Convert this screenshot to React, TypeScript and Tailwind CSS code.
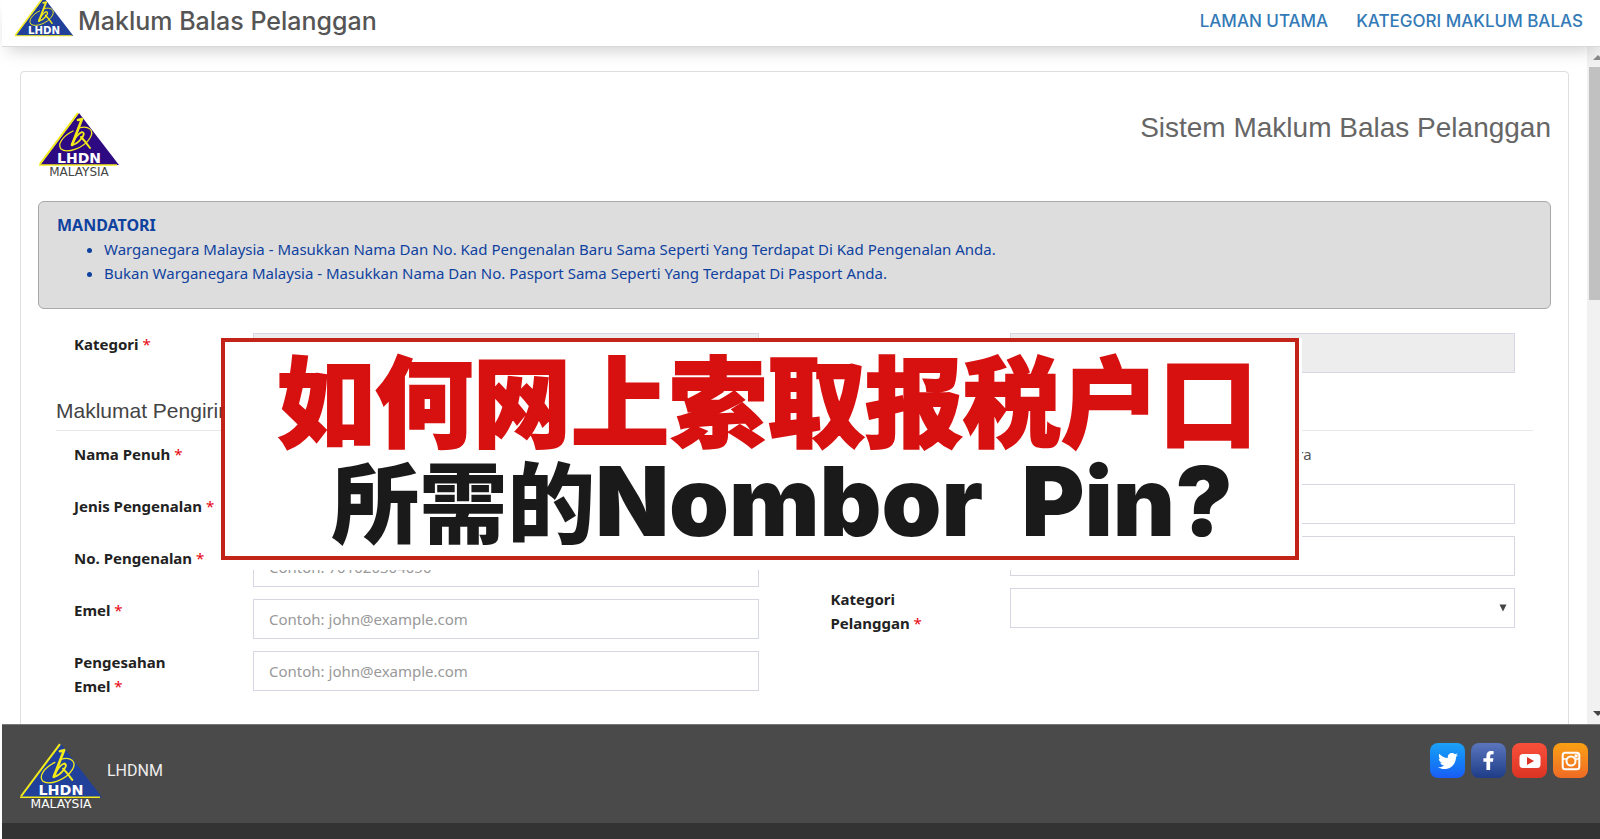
import { ReactNode } from 'react'
import { FaFacebookF, FaTwitter } from 'react-icons/fa'

type LogoProps = {
  className: string
  fill: string
  caption?: string
}

const Logo = ({ className, fill, caption }: LogoProps) => (
  <svg viewBox={caption ? '0 0 82 67' : '0 0 82 54'} className={className} role="img" aria-label="LHDN">
    <path d="M41 1 L81 53 H2 Z" fill={fill} />
    <path d="M40 1 L2 52" stroke="#f2ea1a" strokeWidth="2" fill="none" />
    <path d="M1 53 H79" stroke="#f2ea1a" strokeWidth="1.5" fill="none" />
    <g fill="none" stroke="#f2ea1a" strokeLinecap="round" strokeLinejoin="round">
      <path d="M40 8 L44 7 L34 33" strokeWidth="2.6" />
      <path d="M34 32 Q39 22 44 20 Q48 21 43 27 Q39 32 34 33" strokeWidth="1.8" />
      <path d="M41 16 C50 13 57 18 52 26 C46 36 29 42 23 37 C19 32 25 24 35 19" strokeWidth="1.3" />
      <path d="M43 25 Q47 29 52 36" strokeWidth="2" />
    </g>
    <text x="41" y="50.5" textAnchor="middle" fill="#fff" fontFamily="DejaVu Sans" fontWeight="700" fontSize="14">LHDN</text>
    {caption && (
      <text x="41" y="63.5" textAnchor="middle" fill={caption} fontFamily="DejaVu Sans" fontSize="12">MALAYSIA</text>
    )}
  </svg>
)

type RowProps = {
  id: string
  label?: string
  children: ReactNode
}

const Row = ({ id, label, children }: RowProps) => (
  <div className="flex">
    <div className="-mt-px w-[179px] shrink-0 pr-[38px]">
      {label && (
        <label htmlFor={id} className="font-bold text-[#222]">
          {label}&nbsp;<span className="font-normal text-red-600">*</span>
        </label>
      )}
    </div>
    <div className="relative min-w-0 flex-1">{children}</div>
  </div>
)

const field = 'block h-10 w-full border border-[#d5d8e2] bg-white px-[15px] placeholder:text-[#999] disabled:bg-[#ededed]'

export default function App() {
  return (
    <div className="flex h-screen flex-col overflow-hidden bg-white pl-0.5 font-['Noto_Sans','Noto_Sans_CJK_SC',sans-serif] text-[15px] leading-6">
      <header className="relative z-10 flex h-[47px] shrink-0 items-center justify-between border-b border-[#d9d9d9] bg-white pr-[17px] pb-1 pl-3 font-['Inter',sans-serif] shadow-[0_8px_18px_-6px_rgba(0,0,0,0.22)]">
        <a href="#" className="flex items-center gap-1">
          <Logo className="-mt-2 w-[60px]" fill="#20409a" />
          <span className="text-[25px] font-medium text-[#555]">Maklum Balas Pelanggan</span>
        </a>
        <nav className="flex gap-7 text-[17px] font-medium text-[#337ab7]">
          <a href="#">LAMAN UTAMA</a>
          <a href="#">KATEGORI MAKLUM BALAS</a>
        </nav>
      </header>

      <div className="flex min-h-0 flex-1">
        <main className="min-w-0 flex-1 overflow-hidden pt-6 pr-[18px] pl-[18px]">
          <div className="relative h-[900px] rounded border border-[#dedede] px-[17px] pt-10">
            <div className="flex items-start justify-between">
              <Logo className="w-[82px]" fill="#2e0a82" caption="#444" />
              <h1 className="font-['Liberation_Sans',sans-serif] text-[28px] leading-8 text-[#666]">Sistem Maklum Balas Pelanggan</h1>
            </div>

            <section className="mt-[22px] h-[108px] rounded-md border border-[#a9a9a9] bg-[#ddd] px-[18px] pt-[11px] text-[#0f429f]">
              <h2 className="text-base leading-6 font-bold">MANDATORI</h2>
              <ul className="list-disc pl-[47px]">
                <li>Warganegara Malaysia - Masukkan Nama Dan No. Kad Pengenalan Baru Sama Seperti Yang Terdapat Di Kad Pengenalan Anda.</li>
                <li>Bukan Warganegara Malaysia - Masukkan Nama Dan No. Pasport Sama Seperti Yang Terdapat Di Pasport Anda.</li>
              </ul>
            </section>

            <form>
              <div className="mt-6 grid grid-cols-2">
                <div className="px-9">
                  <Row id="kategori" label="Kategori">
                    <input id="kategori" disabled className={field} />
                  </Row>
                </div>
                <div className="px-9">
                  <Row id="subkategori">
                    <input id="subkategori" aria-label="Sub Kategori" disabled className={field} />
                  </Row>
                </div>
              </div>

              <h2 className="mx-[18px] mt-6 mb-3 border-b border-[#e8e8e8] pb-[5px] font-['Liberation_Sans',sans-serif] text-[21px] leading-7 text-[#444]">Maklumat Pengirim</h2>

              <div className="grid grid-cols-2">
                <div className="flex flex-col gap-3 px-9">
                  <Row id="nama" label="Nama Penuh">
                    <input id="nama" className={field} />
                  </Row>
                  <Row id="jenis" label="Jenis Pengenalan">
                    <input id="jenis" className={field} />
                  </Row>
                  <Row id="nombor" label="No. Pengenalan">
                    <input id="nombor" placeholder="Contoh: 701020304050" className={field} />
                  </Row>
                  <Row id="emel" label="Emel">
                    <input id="emel" type="email" placeholder="Contoh: john@example.com" className={field} />
                  </Row>
                  <Row id="sahemel" label="Pengesahan Emel">
                    <input id="sahemel" type="email" placeholder="Contoh: john@example.com" className={field} />
                  </Row>
                </div>
                <div className="flex flex-col gap-3 px-9">
                  <Row id="warga">
                    <div className="-mt-px flex h-[30px] items-start gap-[126px] text-[#555]">
                      <input id="warga" type="radio" name="warga" aria-label="Warganegara" className="mt-1.5" />
                      <label className="flex items-start gap-1.5">
                        <input type="radio" name="warga" className="mt-1.5" />
                        Bukan Warganegara
                      </label>
                    </div>
                  </Row>
                  <Row id="telefon">
                    <input id="telefon" aria-label="No. Telefon" className={field} />
                  </Row>
                  <Row id="bimbit">
                    <input id="bimbit" aria-label="No. Telefon Bimbit" className={field} />
                  </Row>
                  <Row id="pelanggan" label="Kategori Pelanggan">
                    <select id="pelanggan" className={`${field} appearance-none`} />
                    <svg viewBox="0 0 8 8" className="pointer-events-none absolute top-4 right-2 size-2" fill="#444">
                      <path d="M0.5 0.5 H7.5 L4 7.5 Z" />
                    </svg>
                  </Row>
                </div>
              </div>
            </form>

            <div className="absolute top-[266px] left-[204px] h-[232px] w-[1077px] bg-white" />
            <div className="absolute top-[266px] left-[200px] flex h-[222px] w-[1078px] flex-col items-center border-4 border-[#c0180c]/95 font-['Inter','Noto_Sans_CJK_SC',sans-serif] font-black">
              <p className="mt-2 pl-3.5 text-[98px] leading-[108px] text-[#d71010] [-webkit-text-stroke:2px_#d71010]">如何网上索取报税户口</p>
              <p className="pl-11 text-[88px] leading-[86px] text-[#1a1a1a]">
                所需的<span className="text-[96px]">Nombor&nbsp; Pin?</span>
              </p>
            </div>
          </div>
        </main>

        <div className="flex w-[13px] shrink-0 flex-col overflow-hidden bg-[#f1f1f1] pl-0.5">
          <svg viewBox="0 0 14 20" className="h-5 w-[14px] shrink-0" fill="#8a8a8a">
            <path d="M4 13 L9 8 L14 13 Z" />
          </svg>
          <div className="h-[233px] bg-[#c1c1c1]" />
          <svg viewBox="0 0 14 20" className="mt-auto h-5 w-[14px] shrink-0" fill="#444">
            <path d="M4 7 H14 L9 12 Z" />
          </svg>
        </div>
      </div>

      <footer className="shrink-0 border-b-16 border-[#333] bg-[#4a4a4a]">
        <div className="flex h-[99px] items-start justify-between border-t border-[#777] pt-[18px] pr-3 pl-[17px]">
          <div className="flex items-center gap-1">
            <Logo className="w-[84px]" fill="#20409a" caption="#fff" />
            <span className="-mt-3 font-['Roboto',sans-serif] text-base text-[#eee]">LHDNM</span>
          </div>
          <div className="flex gap-1.5">
            <a href="#" aria-label="Twitter" className="flex size-[35px] items-center justify-center rounded-lg bg-linear-to-b from-[#1da1f6] to-[#1b5cf5] text-white">
              <FaTwitter size={20} />
            </a>
            <a href="#" aria-label="Facebook" className="flex size-[35px] items-center justify-center rounded-lg bg-linear-to-b from-[#5b76bd] to-[#1f3c88] text-white">
              <FaFacebookF size={19} />
            </a>
            <a href="#" aria-label="YouTube" className="flex size-[35px] items-center justify-center rounded-lg bg-linear-to-b from-[#f8503a] to-[#dc3424]">
              <svg viewBox="0 0 22 16" className="w-[22px]">
                <rect x="0.5" y="1" width="21" height="14" rx="3.5" fill="#fff" />
                <path d="M8 4 L15 8 L8 12 Z" fill="#dc3424" />
              </svg>
            </a>
            <a href="#" aria-label="Instagram" className="flex size-[35px] items-center justify-center rounded-lg bg-linear-to-b from-[#f9a011] to-[#ef6a24]">
              <svg viewBox="0 0 20 20" className="w-5" fill="none" stroke="#fff">
                <rect x="1.7" y="1.7" width="16.6" height="16.6" rx="2.5" strokeWidth="2" />
                <path d="M2 8 H5.5 M14.5 8 H18" strokeWidth="1.6" />
                <circle cx="10" cy="10" r="4.5" strokeWidth="2" />
                <rect x="13.6" y="3.4" width="3" height="3" fill="#fff" stroke="none" />
              </svg>
            </a>
          </div>
        </div>
      </footer>
    </div>
  )
}
